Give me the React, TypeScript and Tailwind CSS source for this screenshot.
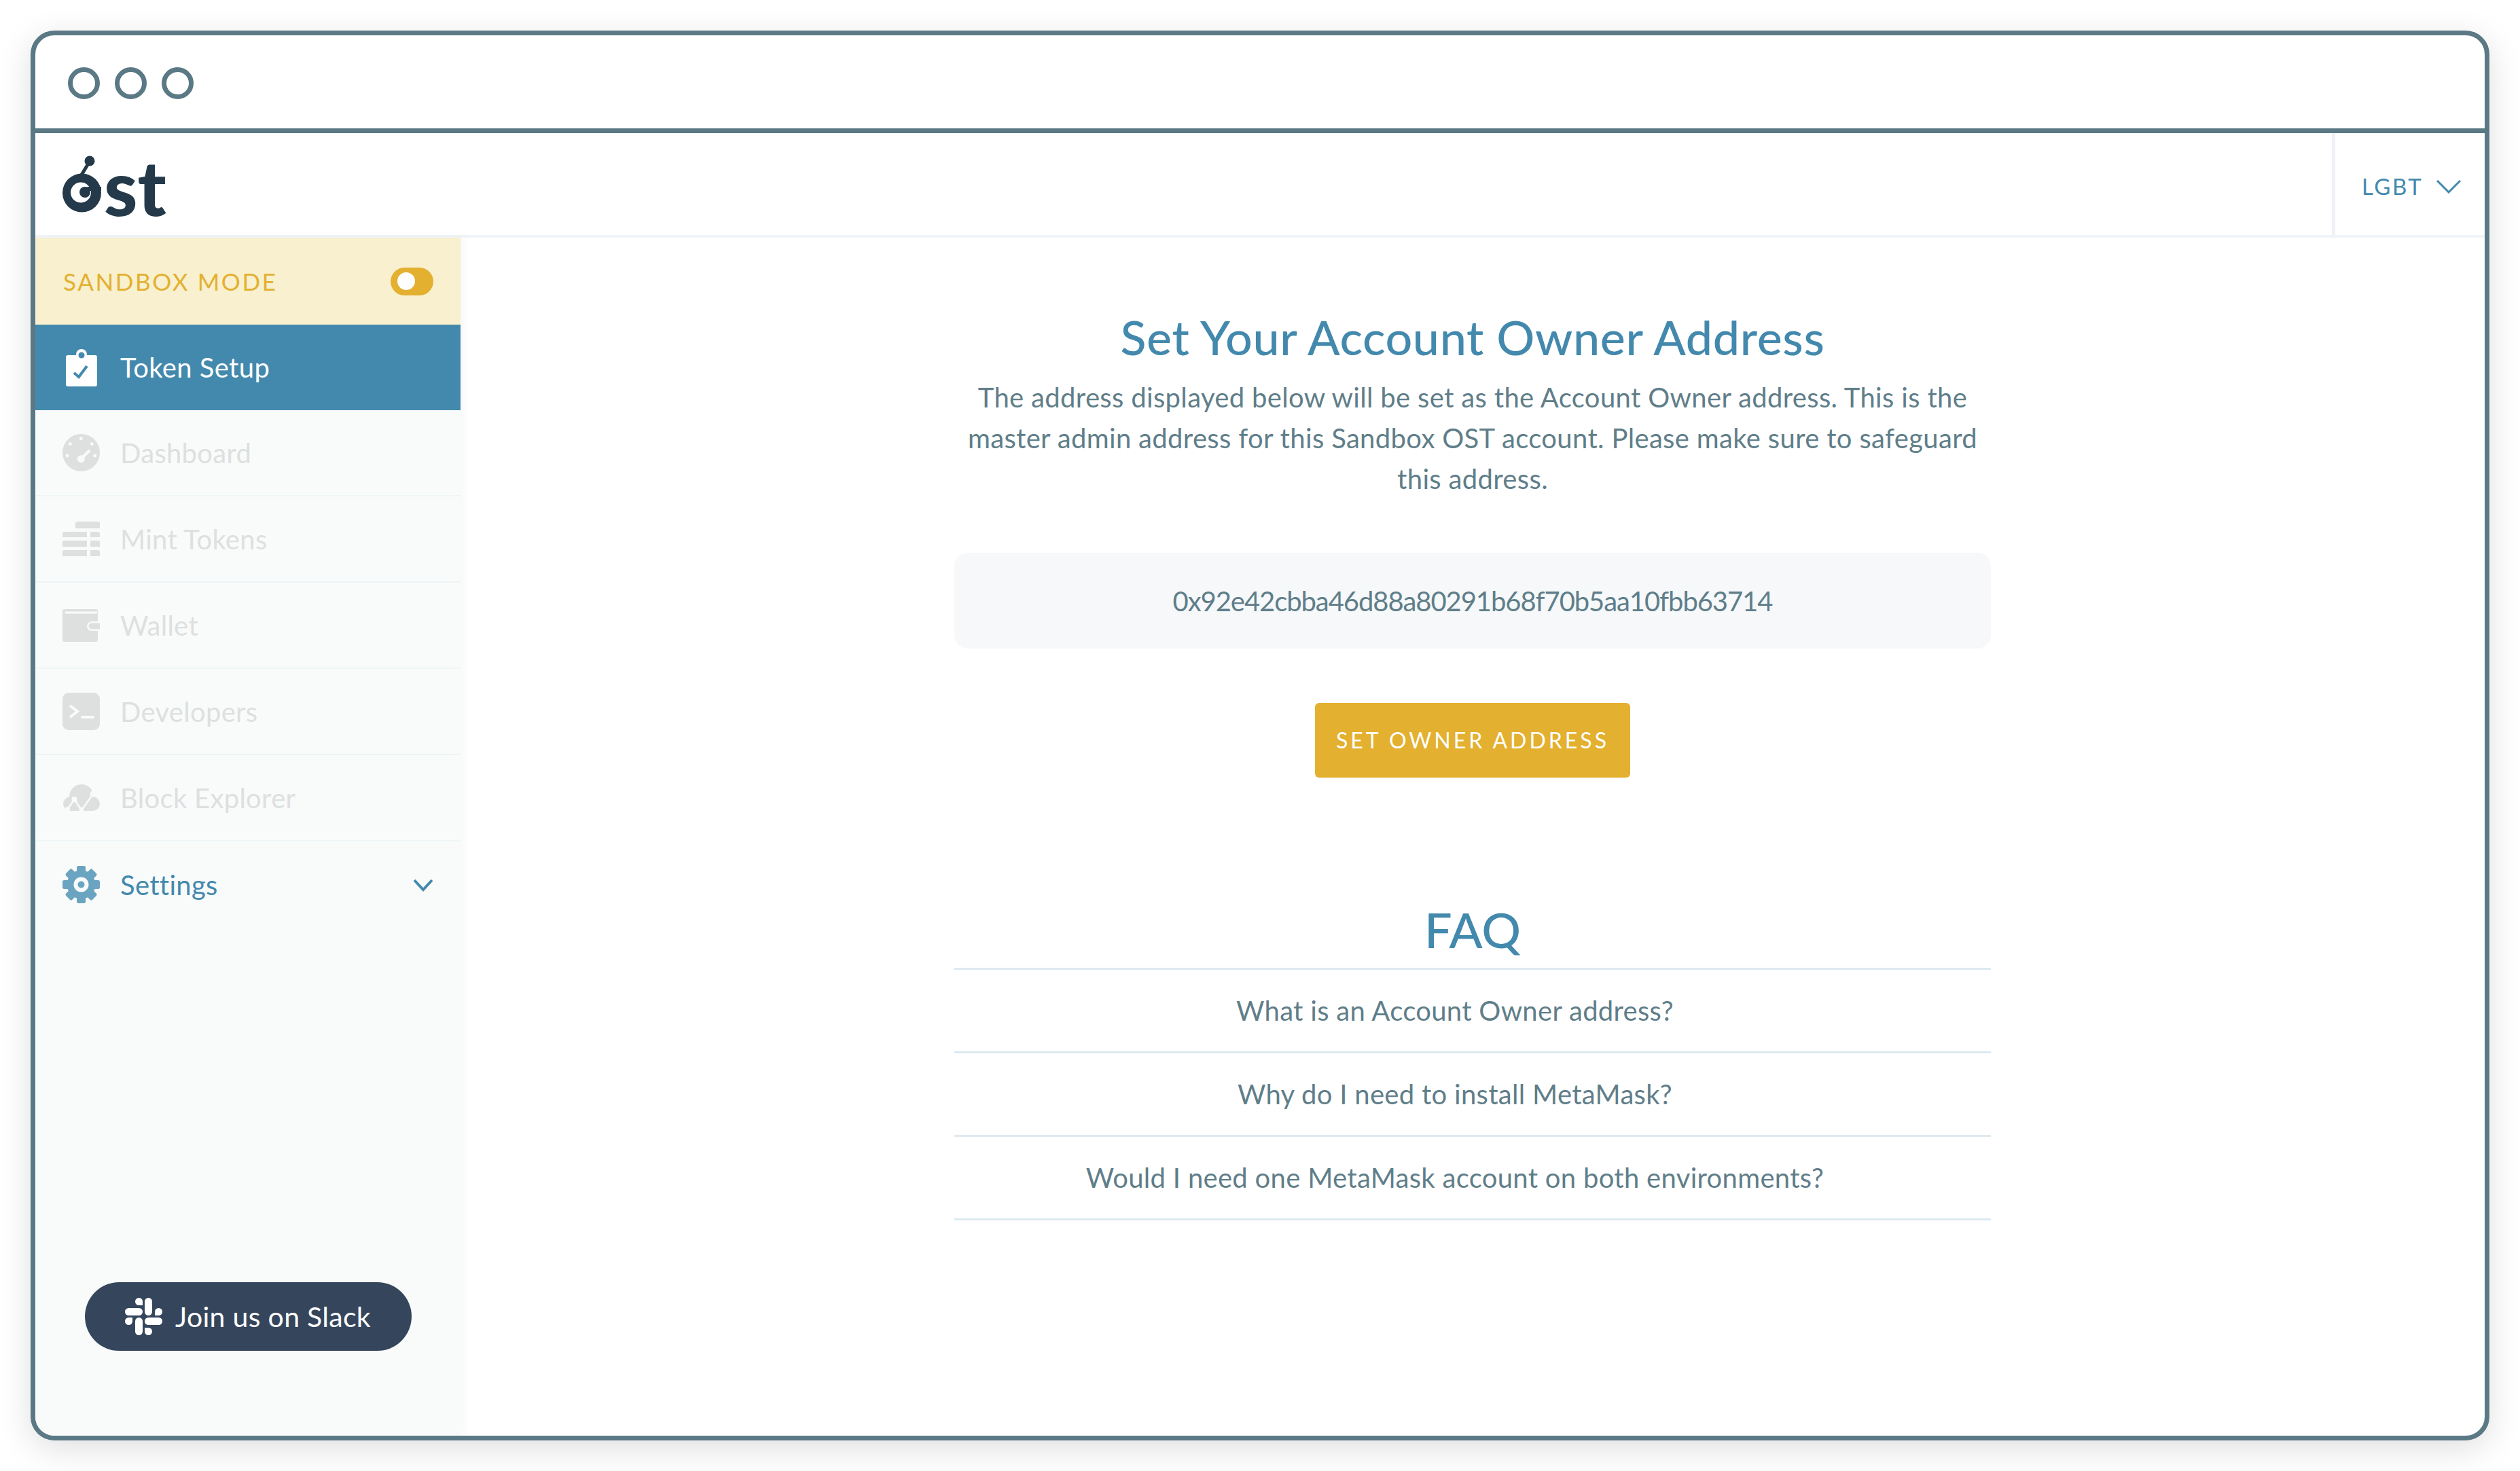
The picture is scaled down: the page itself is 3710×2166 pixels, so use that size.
import type { ReactNode } from "react"

const ClipboardIcon = () => (
  <svg width="46" height="55" viewBox="0 0 46 55">
    <rect y="9" width="46" height="46" rx="3" fill="#fff" />
    <circle cx="23" cy="8" r="8" fill="#fff" />
    <circle cx="23" cy="9" r="4.5" fill="#4389ad" />
    <path d="M12 35l7 6L31 25" fill="none" stroke="#4389ad" strokeWidth="4" />
  </svg>
)

const GaugeIcon = () => (
  <svg width="55" height="55" viewBox="0 0 55 55">
    <circle cx="27.5" cy="27.5" r="27.5" fill="#dde0df" />
    {[
      [27.3, 6.7],
      [43.3, 14.7],
      [47.7, 32],
      [7, 32],
      [11.3, 14.7],
    ].map(([cx, cy]) => (
      <circle key={cx} cx={cx} cy={cy} r="2.4" fill="#f9fbfb" />
    ))}
    <circle cx="27.3" cy="36.7" r="5.5" fill="#f9fbfb" />
    <path d="M27.3 36.7L39 25" stroke="#f9fbfb" strokeWidth="4" strokeLinecap="round" />
  </svg>
)

const BricksIcon = () => (
  <svg width="55" height="51" viewBox="0 0 55 51" fill="#dde0df">
    <path d="M19 10V3a3 3 0 0 1 3-3h30a3 3 0 0 1 3 3v7z" />
    <path d="M0 23v-5a3 3 0 0 1 3-3h33v8z" />
    <path d="M41 15h11a3 3 0 0 1 3 3v5H41z" />
    <path d="M0 37v-6a3 3 0 0 1 3-3h33v9z" />
    <path d="M41 28h11a3 3 0 0 1 3 3v6H41z" />
    <path d="M0 51v-6a3 3 0 0 1 3-3h33v9z" />
    <path d="M41 42h11a3 3 0 0 1 3 3v6H41z" />
  </svg>
)

const WalletIcon = () => (
  <svg width="55" height="48" viewBox="0 0 55 48">
    <rect width="52" height="48" rx="3" fill="#dde0df" />
    <rect x="4" y="3.5" width="47" height="3" fill="#f9fbfb" />
    <path d="M55 18H43a7 7 0 0 0 0 14h12z" fill="#f9fbfb" />
    <path d="M55 20.5H43a4.5 4.5 0 0 0 0 9h12z" fill="#dde0df" />
  </svg>
)

const TerminalIcon = () => (
  <svg width="55" height="55" viewBox="0 0 55 55">
    <rect width="55" height="55" rx="9" fill="#dde0df" />
    <path d="M11 19l11 8.5L11 36" fill="none" stroke="#f9fbfb" strokeWidth="4" />
    <path d="M29 36h16" stroke="#f9fbfb" strokeWidth="4" strokeLinecap="round" />
  </svg>
)

const CloudIcon = () => (
  <svg width="54" height="40" viewBox="0 0 54 40">
    <g fill="#dde0df">
      <circle cx="27" cy="18" r="18" />
      <circle cx="10" cy="28.5" r="10" />
      <circle cx="43.5" cy="28.5" r="10.5" />
      <rect x="10" y="20" width="34" height="19" />
    </g>
    <path d="M6 37L16.500 22 27 38 44 14" fill="none" stroke="#f9fbfb" strokeWidth="2.500" />
    <g fill="#f9fbfb">
      <circle cx="6.500" cy="36.500" r="3.500" />
      <circle cx="16.500" cy="22" r="4" />
      <circle cx="27" cy="37" r="3.500" />
      <circle cx="44" cy="14" r="4.500" />
    </g>
  </svg>
)

const GearIcon = () => (
  <svg width="55" height="55" viewBox="0 0 55 55">
    <g fill="#6ba4c1">
      <circle cx="27.5" cy="27.5" r="21" />
      {[0, 45, 90, 135].map((deg) => (
        <rect
          key={deg}
          x="21"
          y="0"
          width="13"
          height="55"
          rx="2.500"
          transform={`rotate(${deg} 27.5 27.5)`}
        />
      ))}
    </g>
    <circle cx="27.5" cy="27.5" r="11" fill="#f9fbfb" />
    <circle cx="27.5" cy="27.5" r="5" fill="#6ba4c1" />
  </svg>
)

const SlackIcon = () => (
  <svg width="55" height="55" viewBox="0 0 55 55" fill="#fff">
    <rect x="0" y="15" width="26" height="11" rx="5.500" />
    <path d="M26 11h-5.500a5.500 5.500 0 1 1 5.500-5.500z" />
    <rect x="29" y="0" width="11" height="26" rx="5.500" />
    <path d="M44 26v-5.500a5.500 5.500 0 1 1 5.500 5.500z" />
    <rect x="29" y="29" width="26" height="11" rx="5.500" />
    <path d="M29 44h5.500a5.500 5.500 0 1 1-5.500 5.500z" />
    <rect x="15" y="29" width="11" height="26" rx="5.500" />
    <path d="M11 29v5.500a5.500 5.500 0 1 1-5.500-5.500z" />
  </svg>
)

const Logo = () => (
  <div className="flex h-[84px] items-end leading-none text-[#243a4a]">
    <svg width="58" height="84" viewBox="0 0 58 84" className="shrink-0">
      <path d="M27 30L38 12" stroke="#243a4a" strokeWidth="5" />
      <circle cx="40" cy="8" r="7.500" fill="#243a4a" />
      <circle cx="28.500" cy="55" r="28.500" fill="#243a4a" />
      <circle cx="27" cy="54.500" r="15" fill="#fff" />
      <circle cx="33" cy="54" r="8" fill="#243a4a" />
      <path d="M36 46h21v6H40z" fill="#243a4a" />
    </svg>
    <span className="ml-[3px] h-[76px] font-['Lato'] text-[112px] font-black leading-[76px]">
      st
    </span>
  </div>
)

const items: { label: string; icon: ReactNode }[] = [
  { label: "Dashboard", icon: <GaugeIcon /> },
  { label: "Mint Tokens", icon: <BricksIcon /> },
  { label: "Wallet", icon: <WalletIcon /> },
  { label: "Developers", icon: <TerminalIcon /> },
  { label: "Block Explorer", icon: <CloudIcon /> },
]

const faqs = [
  "What is an Account Owner address?",
  "Why do I need to install MetaMask?",
  "Would I need one MetaMask account on both environments?",
]

const Sidebar = () => (
  <aside className="flex w-[626px] shrink-0 flex-col bg-[#f9fbfb] shadow-[6px_0_12px_rgba(0,0,0,0.03)]">
    <div className="flex h-[128px] items-center justify-between bg-[#f8f0ce] pl-[41px] pr-[40px]">
      <span className="text-[35px] tracking-[2.6px] text-[#e3b030]">SANDBOX MODE</span>
      <div className="flex h-[41px] w-[63px] items-center rounded-full bg-[#e3b030] pl-[10px]">
        <div className="h-[26px] w-[26px] rounded-full bg-white" />
      </div>
    </div>
    <div className="flex h-[126px] items-center bg-[#4389ad] text-white">
      <div className="ml-[40px] mr-[30px] flex w-[55px] justify-center">
        <ClipboardIcon />
      </div>
      <span className="text-[40px] tracking-[0.4px]">Token Setup</span>
    </div>
    {items.map((item) => (
      <div
        key={item.label}
        className="flex h-[127px] items-center border-b-2 border-[#eef5f7] text-[#dde0df]"
      >
        <div className="ml-[40px] mr-[30px] flex w-[55px] justify-center">{item.icon}</div>
        <span className="text-[40px] tracking-[0.3px]">{item.label}</span>
      </div>
    ))}
    <div className="flex h-[127px] items-center pr-[40px] text-[#4389ad]">
      <div className="ml-[40px] mr-[30px] flex w-[55px] justify-center">
        <GearIcon />
      </div>
      <span className="flex-1 text-[40px] tracking-[0.3px]">Settings</span>
      <svg width="30" height="20" viewBox="0 0 30 20" fill="none" stroke="#4389ad" strokeWidth="4">
        <path d="M2 3l13 14L28 3" />
      </svg>
    </div>
    <div className="mt-auto flex justify-center pb-[125px]">
      <div className="flex h-[101px] w-[481px] items-center justify-center gap-[19px] rounded-full bg-[#35465c] text-white">
        <SlackIcon />
        <span className="text-[41px] tracking-[0.3px]">Join us on Slack</span>
      </div>
    </div>
  </aside>
)

const App = () => {
  return (
    <div className="h-screen bg-white p-[45px] font-['Lato',sans-serif]">
      <div className="flex h-full flex-col overflow-hidden rounded-[35px] border-[7px] border-[#5a7985] bg-white shadow-[0_12px_50px_rgba(0,0,0,0.13)]">
        <div className="flex h-[144px] shrink-0 items-center gap-[22px] border-b-[7px] border-[#5a7985] pl-[48px] pt-[4px]">
          <div className="h-[47px] w-[47px] rounded-full border-[7px] border-[#5a7985]" />
          <div className="h-[47px] w-[47px] rounded-full border-[7px] border-[#5a7985]" />
          <div className="h-[47px] w-[47px] rounded-full border-[7px] border-[#5a7985]" />
        </div>
        <header className="flex h-[154px] shrink-0 items-center justify-between border-b-4 border-[#f2f5f8] pl-[40px]">
          <Logo />
          <div className="flex h-full w-[225px] items-center gap-[20px] border-l-[5px] border-[#eef2f6] pl-[39px] pt-[8px] text-[#4389ad]">
            <span className="text-[33px] tracking-[2.5px]">LGBT</span>
            <svg width="36" height="20" viewBox="0 0 36 20" fill="none" stroke="#4389ad" strokeWidth="3">
              <path d="M1 1l17 17L35 1" />
            </svg>
          </div>
        </header>
        <div className="flex min-h-0 flex-1">
          <Sidebar />
          <main className="flex flex-1 flex-col items-center pt-[104px]">
            <div className="flex w-[1526px] flex-col items-center">
              <h1 className="text-[70px] font-medium leading-[84px] tracking-[0.63px] text-[#4389ad]">
                Set Your Account Owner Address
              </h1>
              <p className="mt-[17px] w-[1500px] text-center text-[40px] leading-[60px] tracking-[0.34px] text-[#5f7e89]">
                The address displayed below will be set as the Account Owner address. This is the
                master admin address for this Sandbox OST account. Please make sure to safeguard
                this address.
              </p>
              <div className="mt-[79px] flex h-[141px] w-full items-center justify-center rounded-[20px] bg-[#f6f8fa] text-[40px] tracking-[-1.07px] text-[#5f7e89]">
                0x92e42cbba46d88a80291b68f70b5aa10fbb63714
              </div>
              <button className="mt-[80px] h-[110px] w-[464px] rounded-[6px] bg-[#e3b030] text-[32px] tracking-[4px] text-white">
                SET OWNER ADDRESS
              </button>
              <h2 className="mt-[166px] text-[72px] font-medium leading-[114px] text-[#4389ad]">
                FAQ
              </h2>
              <div className="w-full border-t-[3px] border-[#dde9f0]">
                {faqs.map((q) => (
                  <div
                    key={q}
                    className="flex h-[123px] items-center justify-center border-b-[3px] border-[#dde9f0] pr-[52px] text-[40px] tracking-[0.3px] text-[#5f7e89]"
                  >
                    {q}
                  </div>
                ))}
              </div>
            </div>
          </main>
        </div>
      </div>
    </div>
  )
}

export default App
